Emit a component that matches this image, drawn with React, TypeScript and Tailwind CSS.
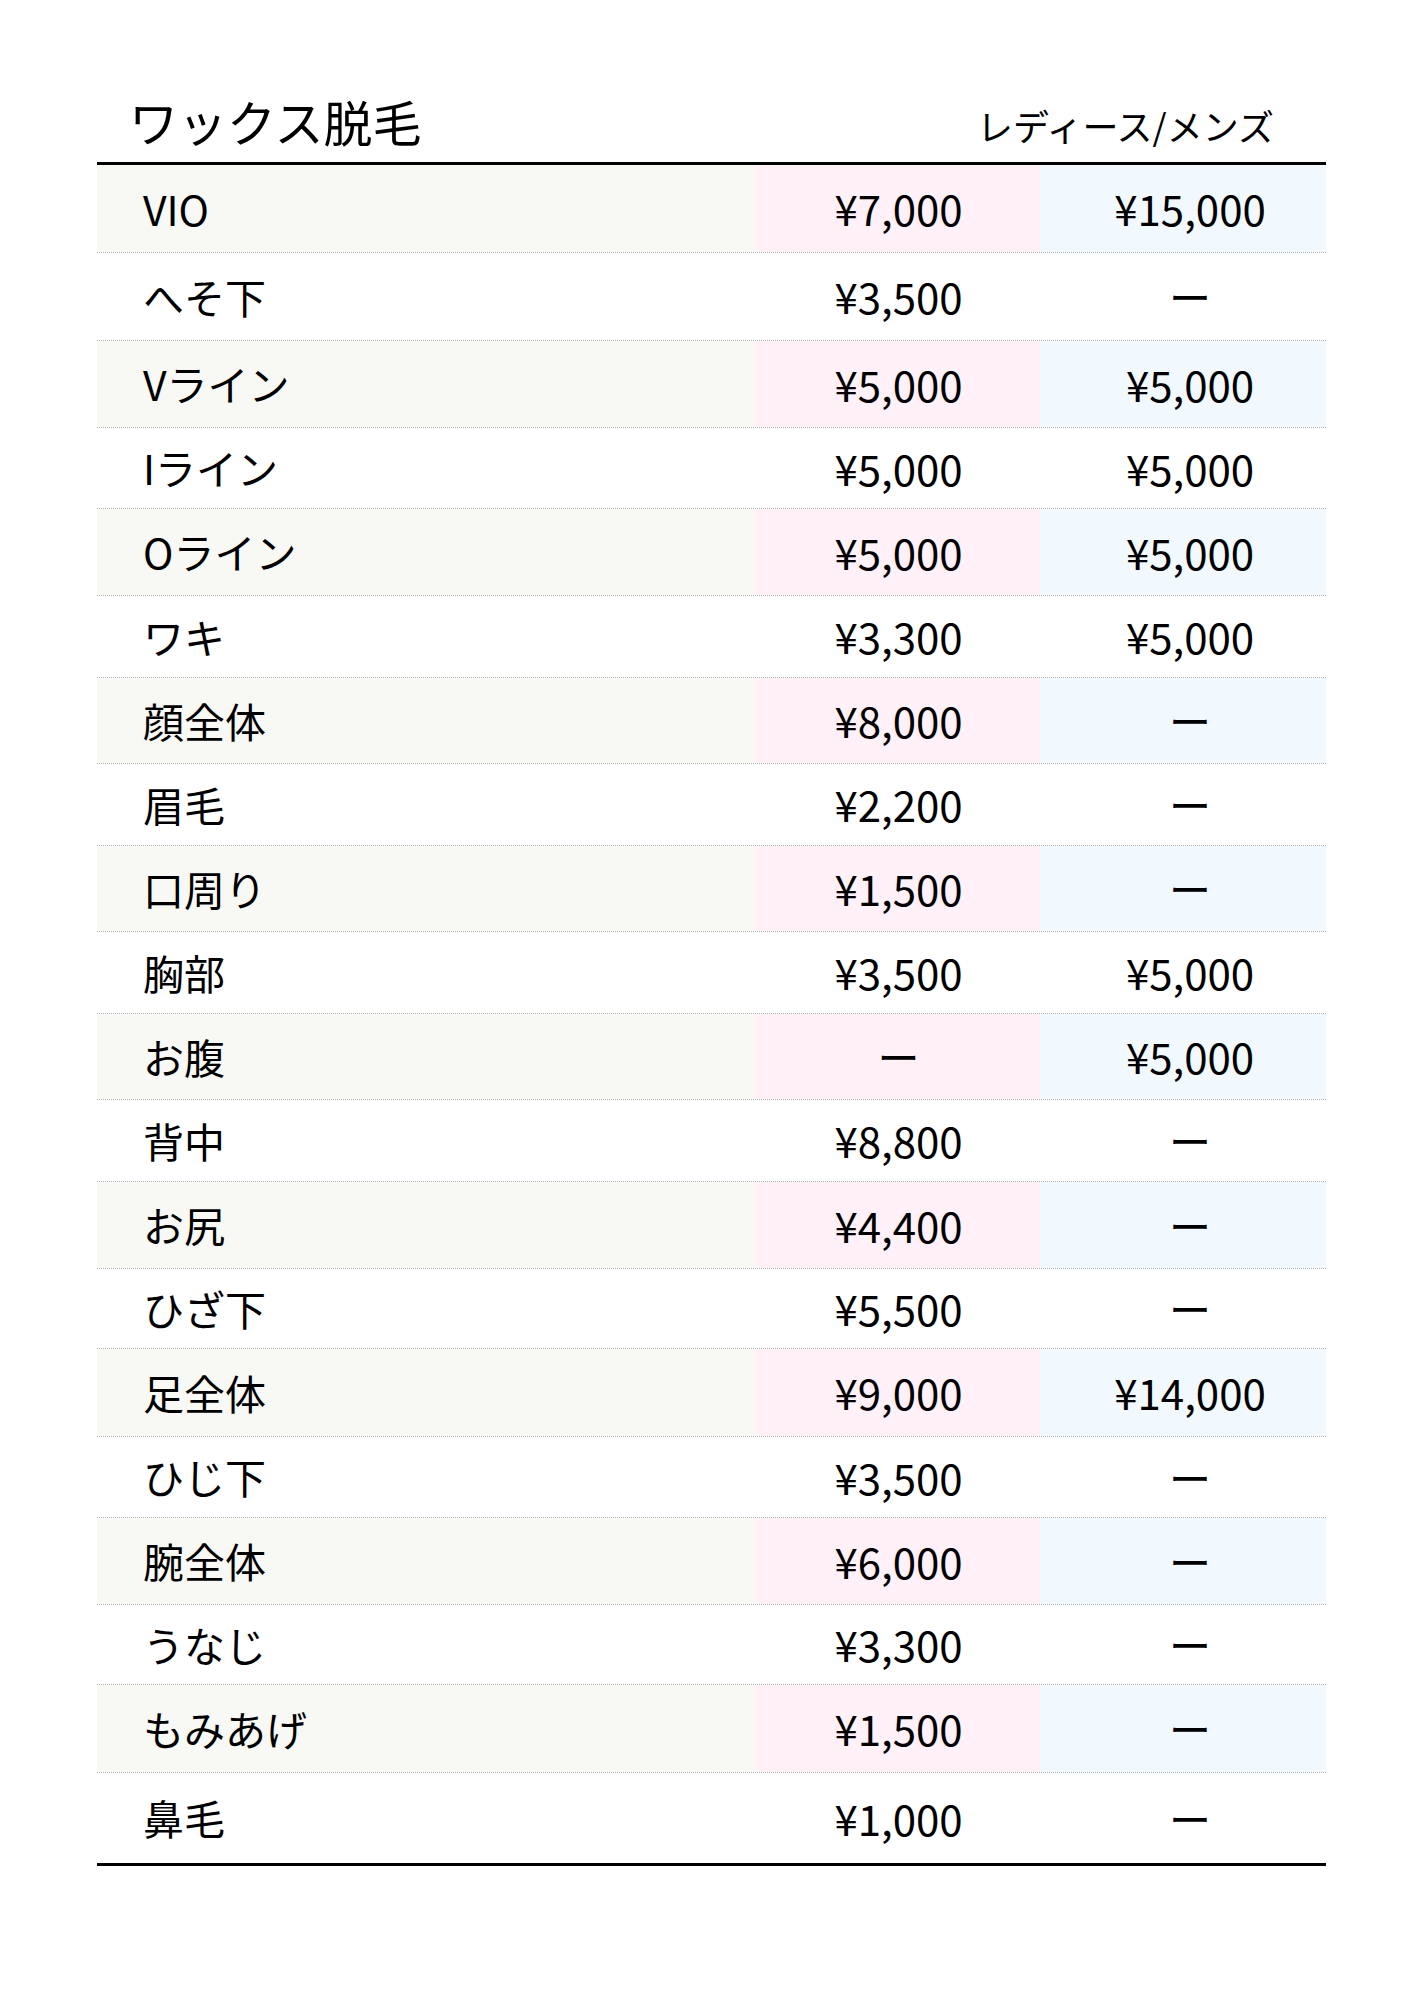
import React from "react";

type Row = {
  name: string;
  ladies: string;
  mens: string;
  h: string;
};

const rows: Row[] = [
  { name: "VIO", ladies: "¥7,000", mens: "¥15,000", h: "h-[88px]" },
  { name: "へそ下", ladies: "¥3,500", mens: "ー", h: "h-[88px]" },
  { name: "Vライン", ladies: "¥5,000", mens: "¥5,000", h: "h-[87px]" },
  { name: "Iライン", ladies: "¥5,000", mens: "¥5,000", h: "h-[81px]" },
  { name: "Oライン", ladies: "¥5,000", mens: "¥5,000", h: "h-[87px]" },
  { name: "ワキ", ladies: "¥3,300", mens: "¥5,000", h: "h-[82px]" },
  { name: "顔全体", ladies: "¥8,000", mens: "ー", h: "h-[86px]" },
  { name: "眉毛", ladies: "¥2,200", mens: "ー", h: "h-[82px]" },
  { name: "口周り", ladies: "¥1,500", mens: "ー", h: "h-[86px]" },
  { name: "胸部", ladies: "¥3,500", mens: "¥5,000", h: "h-[82px]" },
  { name: "お腹", ladies: "ー", mens: "¥5,000", h: "h-[86px]" },
  { name: "背中", ladies: "¥8,800", mens: "ー", h: "h-[82px]" },
  { name: "お尻", ladies: "¥4,400", mens: "ー", h: "h-[87px]" },
  { name: "ひざ下", ladies: "¥5,500", mens: "ー", h: "h-[80px]" },
  { name: "足全体", ladies: "¥9,000", mens: "¥14,000", h: "h-[88px]" },
  { name: "ひじ下", ladies: "¥3,500", mens: "ー", h: "h-[81px]" },
  { name: "腕全体", ladies: "¥6,000", mens: "ー", h: "h-[87px]" },
  { name: "うなじ", ladies: "¥3,300", mens: "ー", h: "h-[80px]" },
  { name: "もみあげ", ladies: "¥1,500", mens: "ー", h: "h-[88px]" },
  { name: "鼻毛", ladies: "¥1,000", mens: "ー", h: "h-[90px]" },
];

function PriceRow({ row, index, last }: { row: Row; index: number; last: boolean }) {
  const shaded = index % 2 === 0;
  return (
    <div
      className={`flex ${row.h} ${
        last ? "" : "border-b border-dotted border-[#b0b0b0]"
      }`}
    >
      <div
        className={`w-[658px] flex items-center pl-[46px] pb-[1px] text-[41px] ${
          shaded ? "bg-[#f8f8f4]" : "bg-white"
        }`}
      >
        {row.name}
      </div>
      <div
        className={`w-[285px] flex items-center justify-center pl-[2px] pb-[1px] ${
          shaded ? "bg-[#fff1f7]" : "bg-white"
        }`}
      >
        {row.ladies}
      </div>
      <div
        className={`w-[286px] flex items-center justify-center pl-[14px] pb-[1px] ${
          shaded ? "bg-[#f1f8fe]" : "bg-white"
        }`}
      >
        {row.mens}
      </div>
    </div>
  );
}

export default function App() {
  return (
    <div
      className="w-[1414px] h-[2000px] bg-white text-black"
      style={{ fontFamily: '"Noto Sans CJK JP", "Noto Sans", sans-serif' }}
    >
      <div className="ml-[97px] w-[1229px]">
        <div className="h-[162px] flex items-end justify-between">
          <h1 className="text-[49px] leading-none pl-[32px] pb-[17px] font-normal">
            ワックス脱毛
          </h1>
          <div className="text-[36px] leading-none pr-[52px] pb-[19px]">
            レディース/メンズ
          </div>
        </div>
        <div className="border-t-[3px] border-b-[3px] border-black text-[42px] leading-none">
          {rows.map((row, i) => (
            <PriceRow key={row.name} row={row} index={i} last={i === rows.length - 1} />
          ))}
        </div>
      </div>
    </div>
  );
}
